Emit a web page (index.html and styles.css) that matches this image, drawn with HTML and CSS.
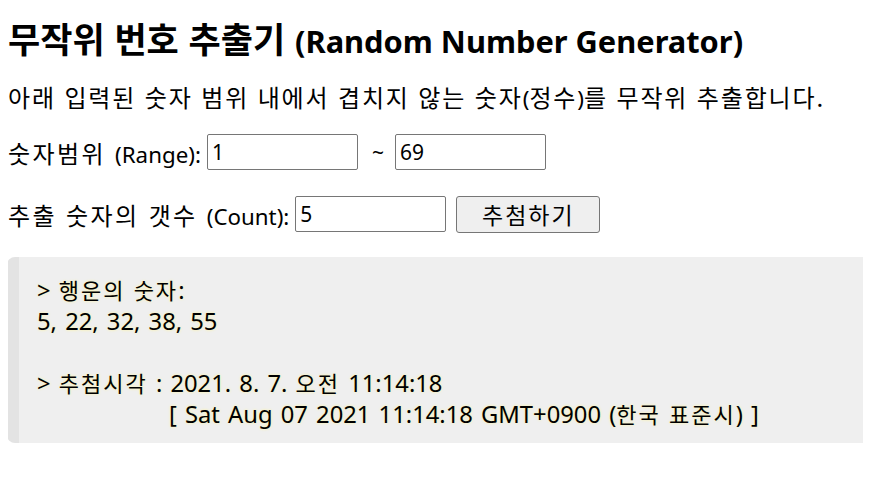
FILE: index.html
```html
<!DOCTYPE html>
<html lang="ko">
<head>
    <meta charset="UTF-8">
    <meta name="viewport" content="width=device-width, initial-scale=1.0">
    <title>무작위 번호 추출기</title>
    <link rel="stylesheet" href="styles.css">
</head>
<body>
    <h1>무작위 번호 추출기 <span class="en">(Random Number Generator)</span></h1>

    <p>아래 입력된 숫자 범위 내에서 겹치지 않는 숫자<span class="en">(</span>정수<span class="en">)</span>를 무작위 추출합니다.</p>

    <div class="form-row">
        <label for="minNum">숫자범위 <span class="en">(Range):</span></label>
        <input type="text" id="minNum" value="1">
        <span class="tilde">~</span>
        <input type="text" id="maxNum" value="69">
    </div>

    <div class="form-row">
        <label for="countNum">추출 숫자의 갯수 <span class="en">(Count):</span></label>
        <input type="text" id="countNum" value="5">
        <button onclick="추첨()">추첨하기</button>
    </div>

    <div id="resultado" class="resultado">
        <div><span class="en">&gt;</span> 행운의 숫자<span class="en">:</span></div>
        <div><span class="en">5, 22, 32, 38, 55</span></div>
        <div class="blank"></div>
        <div><span class="en">&gt;</span> 추첨시각 <span class="en">: 2021. 8. 7.</span> 오전 <span class="en">11:14:18</span></div>
        <div class="indent"><span class="en">[ Sat Aug 07 2021 11:14:18 GMT+0900 (</span>한국 표준시<span class="en">) ]</span></div>
    </div>
</body>
</html>
```

FILE: styles.css
```css
html {
    overflow-x: hidden;
}
body {
    font-family: "Noto Sans CJK KR", sans-serif;
    margin: 8px;
    color: #000;
    background: #fff;
}
.en {
    font-family: "Noto Sans", "Noto Sans CJK KR", sans-serif;
    font-size: 0.93em;
    letter-spacing: 0;
    line-height: 1;
}
h1 {
    font-size: 35px;
    font-weight: bold;
    margin: 8px 0 0;
    height: 44px;
    line-height: 44px;
}
h1 .en {
    font-size: 0.88em;
}
p {
    font-size: 24px;
    letter-spacing: 1.85px;
    margin: 20px 0 0;
    height: 34px;
    line-height: 34px;
}
.form-row {
    display: flex;
    align-items: center;
    font-size: 24px;
    letter-spacing: 2.4px;
    margin-top: 20px;
    height: 36px;
}
.form-row + .form-row {
    margin-top: 26px;
}
label {
    margin-right: 6px;
}
input {
    width: 151px;
    height: 36px;
    box-sizing: border-box;
    border: 1px solid #767676;
    border-radius: 2px;
    padding: 1px 4px;
    font-family: "Noto Sans", sans-serif;
    font-size: 21px;
    letter-spacing: 0;
}
.tilde {
    margin: 0 11px 0 14px;
    font-family: "Noto Sans", sans-serif;
    font-size: 21px;
    letter-spacing: 0;
}
button {
    margin-left: 10px;
    width: 144px;
    height: 37px;
    border: 1px solid #767676;
    border-radius: 3px;
    background: #efefef;
    font-family: "Noto Sans CJK KR", sans-serif;
    font-size: 23px;
    letter-spacing: 2px;
    line-height: 1;
    cursor: pointer;
}
.resultado {
    margin: 25px -30px 0 -1px;
    height: 186px;
    box-sizing: border-box;
    background: #efefef;
    border-left: 12px solid #e3e3e3;
    border-radius: 8px 0 0 8px;
    padding: 17px 17px 17px 18px;
    font-size: 22px;
    letter-spacing: 2px;
    line-height: 31px;
    text-shadow: 0 0 3px #fff59a;
}
.resultado .en {
    font-size: 1.08em;
    word-spacing: 2px;
}
.blank {
    height: 31px;
}
.indent {
    padding-left: 132px;
}
```
